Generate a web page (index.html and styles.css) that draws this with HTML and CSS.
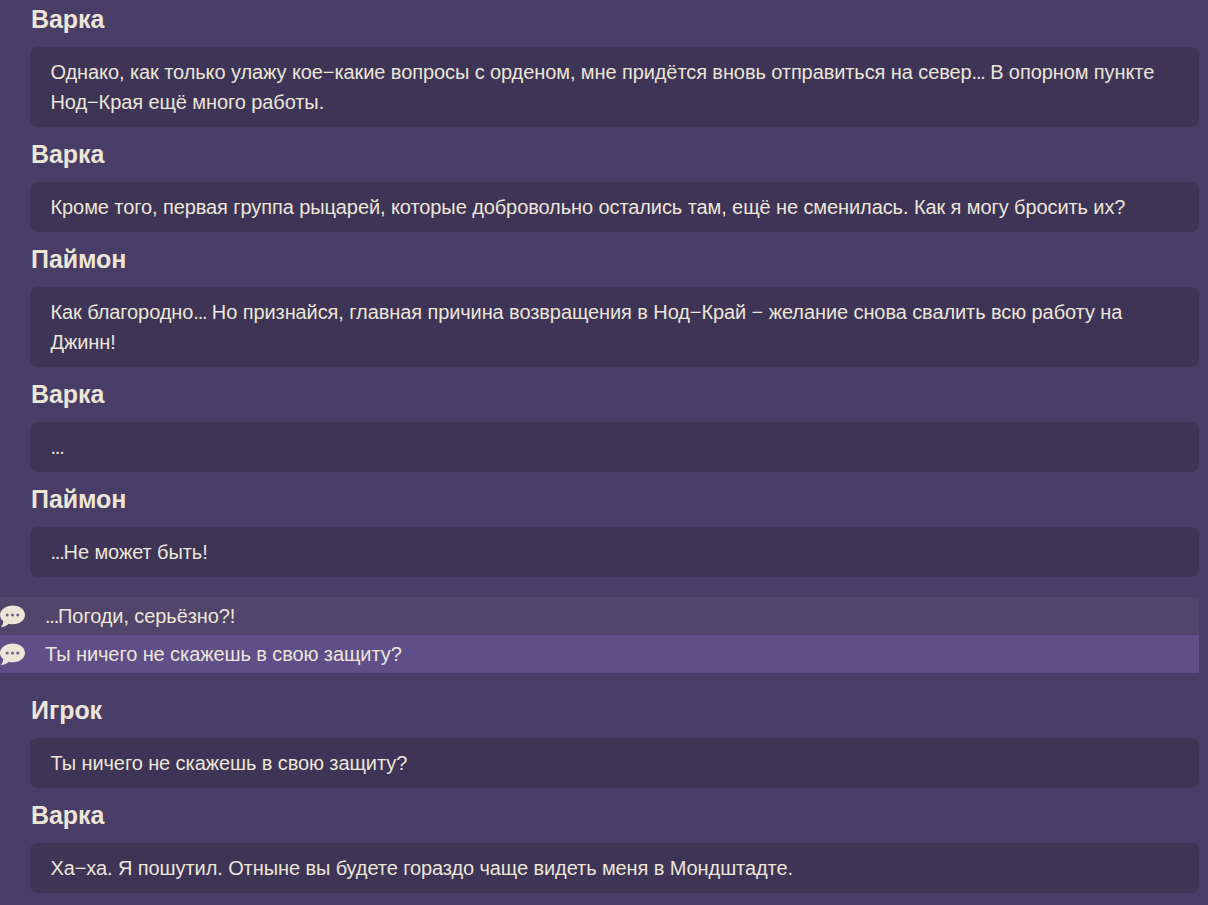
FILE: index.html
```html
<!DOCTYPE html>
<html lang="ru">
  <head>
    <meta charset="utf-8">
    <title>Диалог</title>
    <link rel="stylesheet" href="styles.css">
  </head>
  <body>
    <div class="log">
      <div class="name">Варка</div>
      <div class="line">Однако, как только улажу кое−какие вопросы с орденом, мне придётся вновь отправиться на север<span class="dots">...</span> В опорном пункте<br>Нод−Края ещё много работы.</div>

      <div class="name">Варка</div>
      <div class="line">Кроме того, первая группа рыцарей, которые добровольно остались там, ещё не сменилась. Как я могу бросить их?</div>

      <div class="name">Паймон</div>
      <div class="line">Как благородно<span class="dots">...</span> Но признайся, главная причина возвращения в Нод−Край − желание снова свалить всю работу на<br>Джинн!</div>

      <div class="name">Варка</div>
      <div class="line"><span class="dots">...</span></div>

      <div class="name">Паймон</div>
      <div class="line"><span class="dots">...</span>Не может быть!</div>

      <div class="choices">
        <div class="choice">
          <svg class="bubble" viewBox="0 0 26 24"><path d="M13.5 1C20.4 1 26 5.100 26 10.800S20.400 20.600 13.500 20.600c-1.600 0-3.100-.2-4.500-.6C7.300 21.800 4.200 23.700 .8 23.500 2.500 22 3.400 19.900 3.300 17.300 1.100 15.600 0 13.300 0 10.800 0 5.100 6.600 1 13.500 1Z"/><circle class="dot" cx="7.500" cy="11" r="1.600"/><circle class="dot" cx="13" cy="11" r="1.600"/><circle class="dot" cx="18.500" cy="11" r="1.600"/></svg>
          <span><span class="dots">...</span>Погоди, серьёзно?!</span>
        </div>
        <div class="choice active">
          <svg class="bubble" viewBox="0 0 26 24"><path d="M13.5 1C20.4 1 26 5.100 26 10.800S20.400 20.600 13.500 20.600c-1.600 0-3.100-.2-4.500-.6C7.300 21.800 4.200 23.700 .8 23.500 2.500 22 3.400 19.900 3.300 17.300 1.100 15.600 0 13.300 0 10.800 0 5.100 6.600 1 13.500 1Z"/><circle class="dot" cx="7.500" cy="11" r="1.600"/><circle class="dot" cx="13" cy="11" r="1.600"/><circle class="dot" cx="18.500" cy="11" r="1.600"/></svg>
          <span>Ты ничего не скажешь в свою защиту?</span>
        </div>
      </div>

      <div class="name">Игрок</div>
      <div class="line">Ты ничего не скажешь в свою защиту?</div>

      <div class="name">Варка</div>
      <div class="line">Ха−ха. Я пошутил. Отныне вы будете гораздо чаще видеть меня в Мондштадте.</div>
    </div>
  </body>
</html>
```

FILE: styles.css
```css
body { margin: 0; background-color: #483d66; color: #ece5d8; font-family: "Liberation Sans", Arial, sans-serif; font-size: 20px; letter-spacing: -0.09px; overflow: hidden; }
.log { padding: 2px 9px 0 0; }
.name { margin: 10px 0 10px 31px; font-size: 25px; font-weight: bold; line-height: 35px; }
.name:first-child { margin-top: 0; }
.line { margin-left: 30px; padding: 10px 21px 10px 20.5px; background-color: #3d3456; border-radius: 8px; line-height: 30px; }
.dots { letter-spacing: -1.2px; }
.choices { margin: 20px 0; }
.choice { display: flex; align-items: center; gap: 20px; height: 38px; background-color: #50466b; }
.choice.active { background-color: #5f4f88; }
.bubble { width: 25px; height: 24px; flex: none; fill: #ece5d8; }
.bubble .dot { fill: #6b6280; }
```
